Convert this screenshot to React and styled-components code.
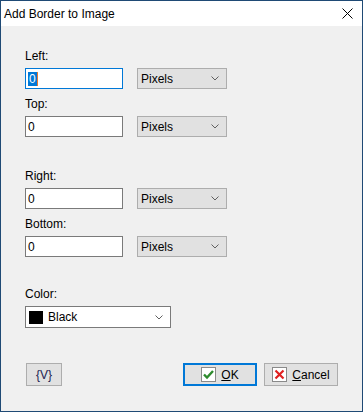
import React from 'react';
import styled, { createGlobalStyle } from 'styled-components';

const GlobalStyle = createGlobalStyle`
  html, body {
    margin: 0;
    padding: 0;
    background: #ffffff;
  }
  body {
    font-family: "Liberation Sans", Arial, sans-serif;
    font-size: 12px;
    color: #000;
  }
`;

const Window = styled.div`
  width: 363px;
  height: 412px;
  box-sizing: border-box;
  border: 1px solid #1f4a75;
  display: flex;
  flex-direction: column;
  background: #f0f0f0;
`;

const TitleBar = styled.div`
  height: 25px;
  background: #ffffff;
  display: flex;
  align-items: center;
  justify-content: space-between;
  padding: 0 9px 0 3px;
`;

const Title = styled.span`
  font-size: 12px;
  color: #000;
`;

const Body = styled.div`
  flex: 1;
  display: flex;
  flex-direction: column;
  padding: 23px 24px 25px 24px;
`;

const Field = styled.div`
  display: flex;
  flex-direction: column;
  gap: 4px;
  margin-top: ${(p) => p.$gap || 0}px;
`;

const Label = styled.label`
  line-height: 15px;
  height: 15px;
`;

const Row = styled.div`
  display: flex;
  align-items: center;
  gap: 14px;
`;

const TextBox = styled.div`
  width: 98px;
  height: 21px;
  box-sizing: border-box;
  background: #fff;
  border: 1px solid ${(p) => (p.$focused ? '#0078d7' : '#7a7a7a')};
  display: flex;
  align-items: center;
  padding-left: 2px;
`;

const Selected = styled.span`
  background: #0078d7;
  color: #fff;
  line-height: 14px;
  padding: 0 1px;
  border-right: 1px solid #e8772e;
`;

const Combo = styled.div`
  width: ${(p) => p.$width || 90}px;
  height: ${(p) => p.$height || 21}px;
  box-sizing: border-box;
  background: ${(p) => (p.$white ? '#ffffff' : '#e1e1e1')};
  border: 1px solid ${(p) => (p.$white ? '#7a7a7a' : '#adadad')};
  display: flex;
  align-items: center;
  padding: 0 7px 0 3px;
  gap: 5px;
`;

const ComboText = styled.span`
  flex: 1;
`;

const Swatch = styled.span`
  width: 14px;
  height: 13px;
  background: #000;
`;

const ButtonRow = styled.div`
  margin-top: auto;
  display: flex;
  align-items: center;
  gap: 7px;
`;

const Button = styled.button`
  height: 23px;
  width: ${(p) => p.$width || 74}px;
  box-sizing: border-box;
  background: #e1e1e1;
  border: ${(p) => (p.$default ? '2px solid #0078d7' : '1px solid #adadad')};
  font-family: inherit;
  font-size: 12px;
  color: #000;
  display: flex;
  align-items: center;
  justify-content: center;
  gap: 5px;
  padding: 0;
  margin-left: ${(p) => (p.$push ? 'auto' : '0')};
`;

const VarButton = styled(Button)`
  margin-left: 1px;
  color: #1c1c50;
`;

const Underline = styled.span`
  text-decoration: underline;
`;

const Chevron = () => (
  <svg width="8" height="5" viewBox="0 0 8 5">
    <path d="M0.5 0.5 L4 4 L7.5 0.5" fill="none" stroke="#606060" strokeWidth="1" />
  </svg>
);

const CloseIcon = () => (
  <svg width="11" height="11" viewBox="0 0 11 11">
    <path d="M0.5 0.5 L10.5 10.5 M10.5 0.5 L0.5 10.5" stroke="#000" strokeWidth="1" />
  </svg>
);

const CheckIcon = () => (
  <svg width="15" height="15" viewBox="0 0 15 15">
    <rect x="0.5" y="0.5" width="14" height="14" fill="#fff" stroke="#8a8a8a" />
    <path d="M3 7.5 L6 10.5 L12 4" fill="none" stroke="#2e8b2e" strokeWidth="2.4" />
  </svg>
);

const CrossIcon = () => (
  <svg width="15" height="15" viewBox="0 0 15 15">
    <rect x="0.5" y="0.5" width="14" height="14" fill="#fff" stroke="#8a8a8a" />
    <path d="M3.5 3.5 L11.5 11.5 M11.5 3.5 L3.5 11.5" stroke="#e02020" strokeWidth="2.2" />
  </svg>
);

const SizeField = ({ label, gap, focused }) => (
  <Field $gap={gap}>
    <Label>{label}</Label>
    <Row>
      <TextBox $focused={focused}>
        {focused ? <Selected>0</Selected> : <span>0</span>}
      </TextBox>
      <Combo>
        <ComboText>Pixels</ComboText>
        <Chevron />
      </Combo>
    </Row>
  </Field>
);

export default function App() {
  return (
    <>
      <GlobalStyle />
      <Window>
        <TitleBar>
          <Title>Add Border to Image</Title>
          <CloseIcon />
        </TitleBar>
        <Body>
          <SizeField label="Left:" focused />
          <SizeField label="Top:" gap={8} />
          <SizeField label="Right:" gap={32} />
          <SizeField label="Bottom:" gap={8} />
          <Field $gap={30}>
            <Label>Color:</Label>
            <Combo $white $width={146} $height={22}>
              <Swatch />
              <ComboText>Black</ComboText>
              <Chevron />
            </Combo>
          </Field>
          <ButtonRow>
            <VarButton $width={36}>{'{V}'}</VarButton>
            <Button $default $push>
              <CheckIcon />
              <span><Underline>O</Underline>K</span>
            </Button>
            <Button>
              <CrossIcon />
              <span><Underline>C</Underline>ancel</span>
            </Button>
          </ButtonRow>
        </Body>
      </Window>
    </>
  );
}
